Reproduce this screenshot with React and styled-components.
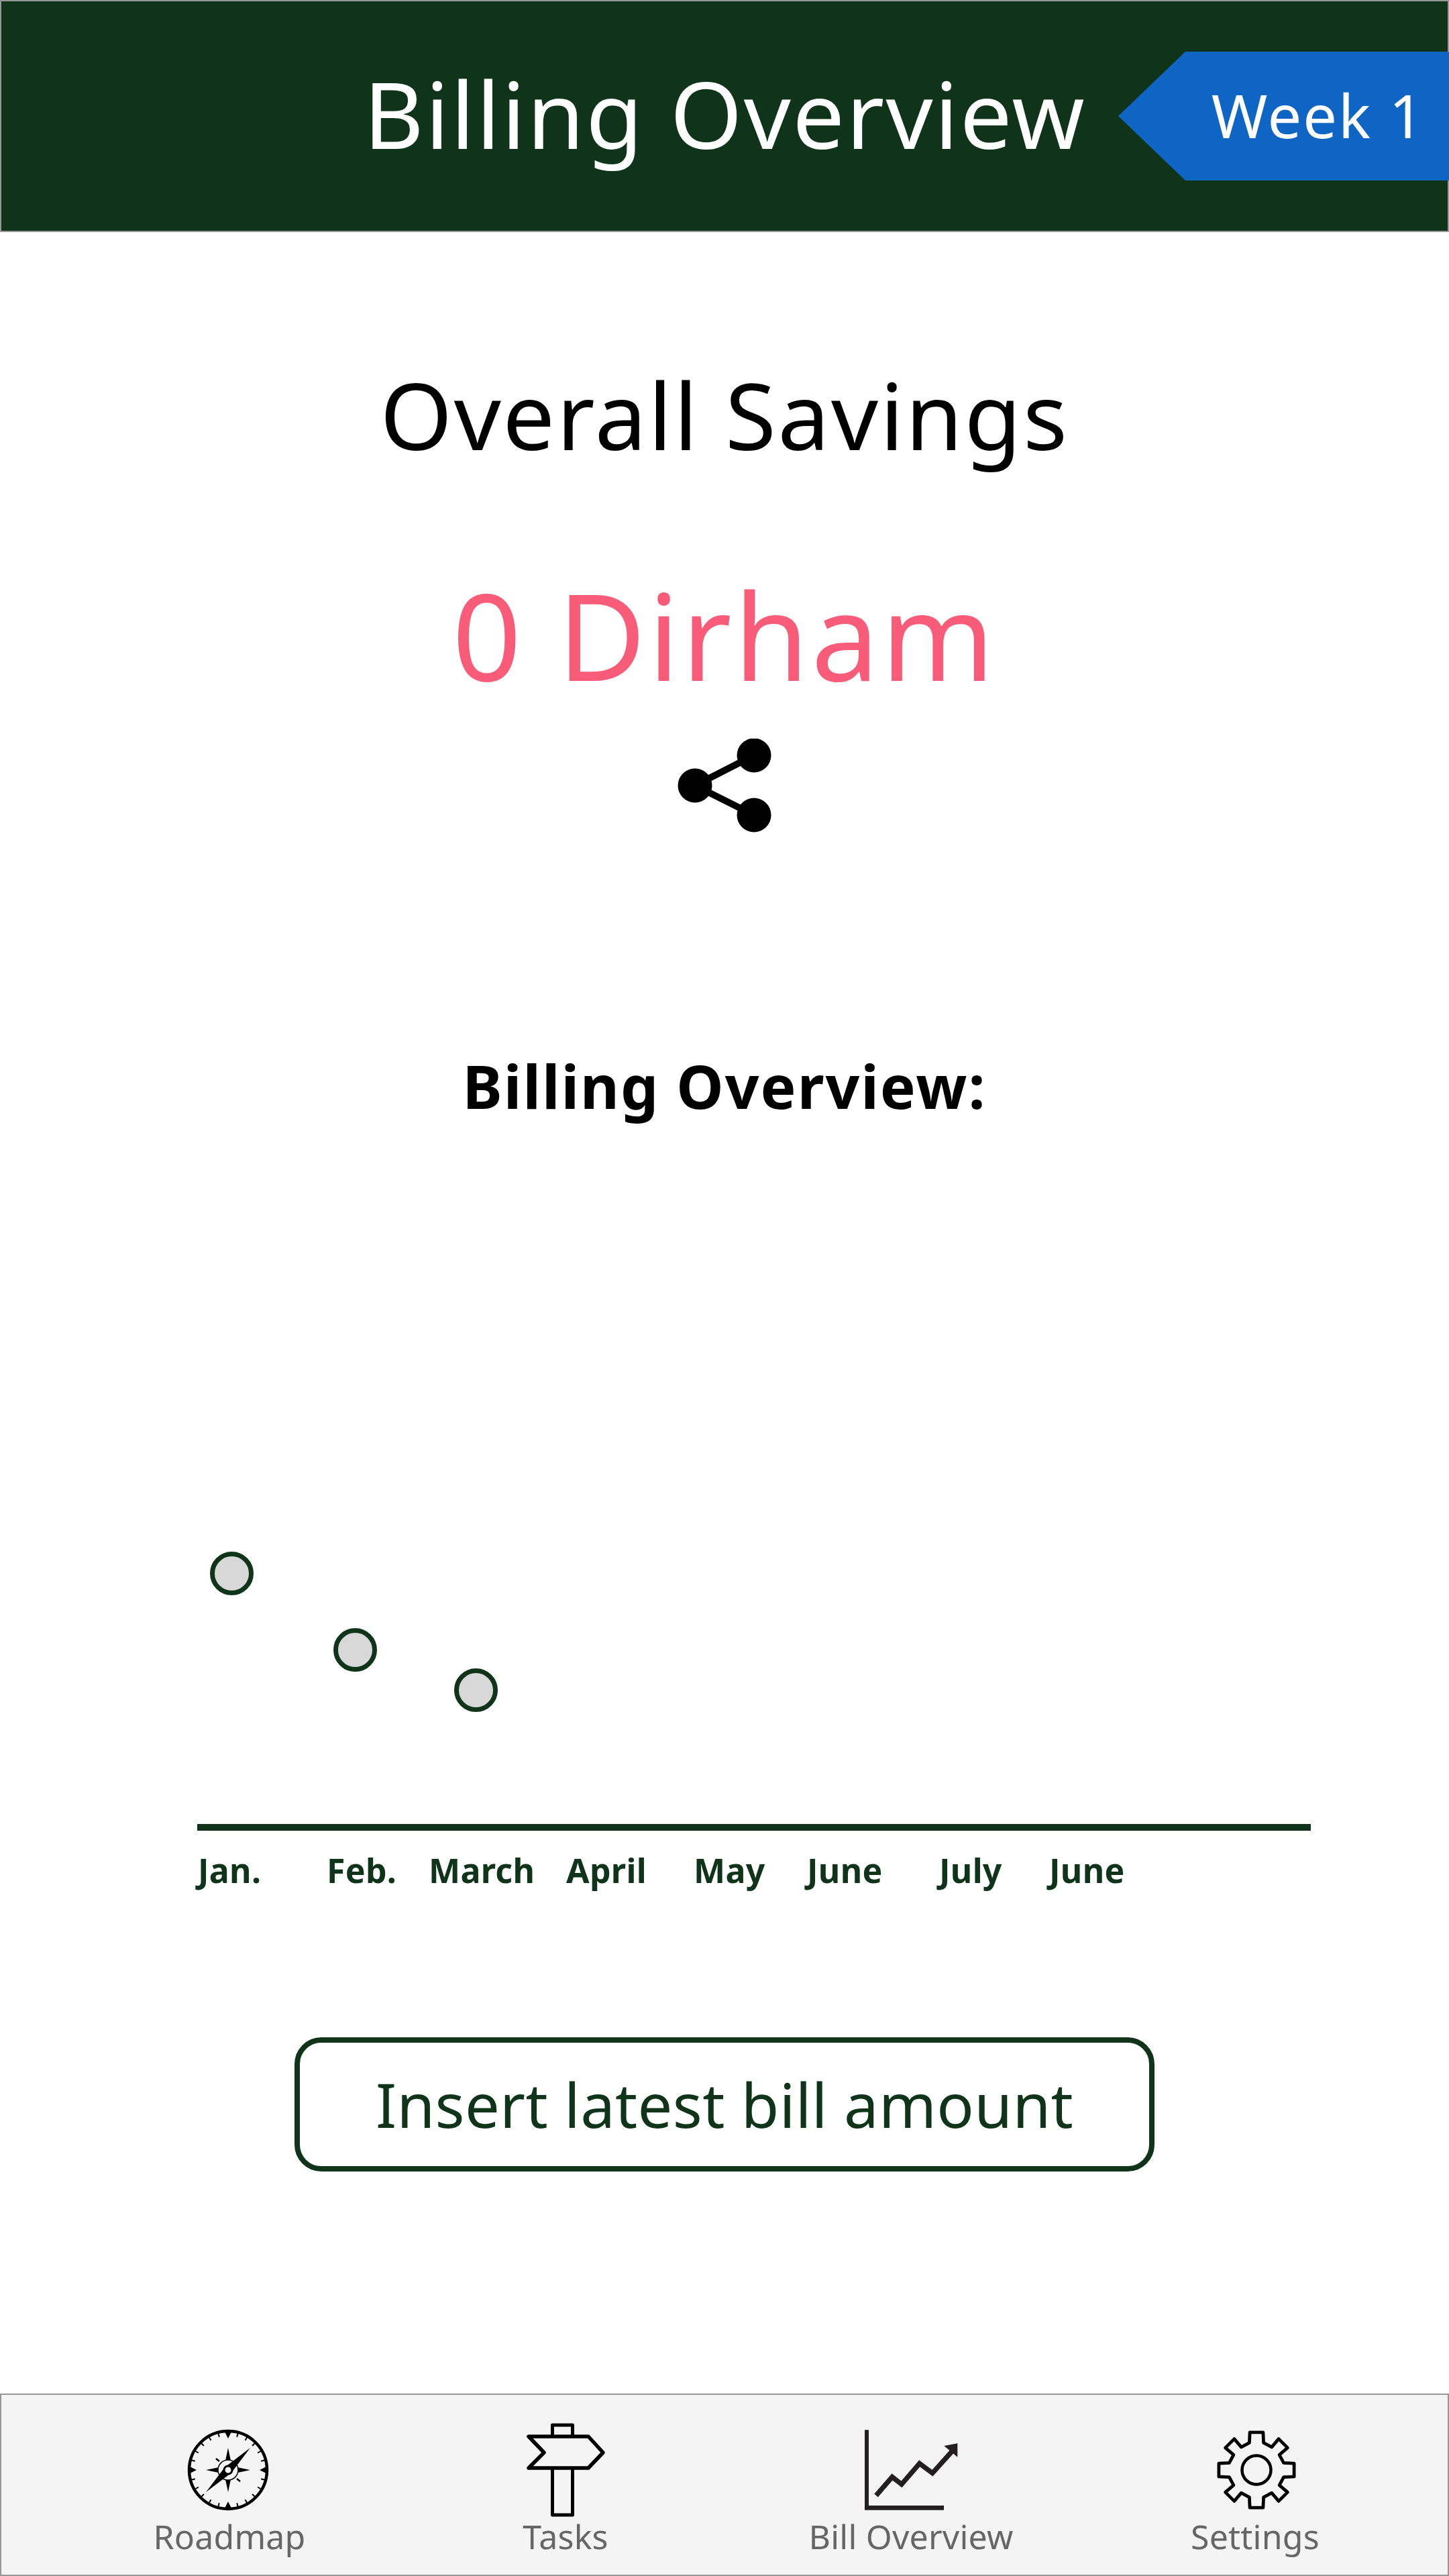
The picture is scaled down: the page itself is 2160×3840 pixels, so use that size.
import React from "react";
import styled, { createGlobalStyle } from "styled-components";

const GREEN = "#10341a";
const FONT = '"Noto Sans", "DejaVu Sans", sans-serif';

const Global = createGlobalStyle`
  html, body { margin: 0; padding: 0; background: #fff; }
  * { box-sizing: border-box; }
`;
const Page = styled.div`
  width: 2160px; height: 3840px; display: flex; flex-direction: column;
  font-family: ${FONT}; background: #fff; overflow: hidden;
`;
const Header = styled.header`
  height: 346px; flex: none; background: ${GREEN}; border: 2px solid #979797;
  display: flex; align-items: center; justify-content: flex-end;
`;
const HeaderTitle = styled.h1`
  margin: 0 48px 10px 0; font-size: 138px; font-weight: 400; color: #fff; line-height: 1;
  letter-spacing: 2.3px; white-space: nowrap;
`;
const WeekTag = styled.div`
  width: 493px; height: 192px; background: #0f65c4; color: #fff;
  clip-path: polygon(0 50%, 100px 0, 100% 0, 100% 100%, 100px 100%);
  display: flex; align-items: center; justify-content: flex-end; padding: 0 36px 4px 0;
  font-size: 90px; line-height: 1; letter-spacing: 2px; margin-right: -2px; white-space: nowrap;
`;
const Main = styled.main`
  flex: 1; display: flex; flex-direction: column; align-items: center; min-height: 0;
`;
const SavingsTitle = styled.h2`
  margin: 202px 0 0; font-size: 138px; font-weight: 400; line-height: 1; color: #000;
  letter-spacing: 2.5px;
`;
const Amount = styled.div`
  margin-top: 170px; font-size: 180px; line-height: 1; color: #f85c78; letter-spacing: 3.6px;
`;
const ShareIcon = styled.svg`
  display: block; margin-top: 65px; width: 140px; height: 140px; flex: none;
`;
const ChartTitle = styled.h3`
  margin: 333px 0 0; font-size: 89px; font-weight: 700; line-height: 1; color: #000;
  letter-spacing: 2px;
`;
const Chart = styled.div`
  position: relative; width: 1660px; margin: 650px 0 0 88px; height: 518px; flex: none;
  display: flex; flex-direction: column; justify-content: flex-end;
`;
const Dot = styled.span`
  position: absolute; width: 65px; height: 65px; border-radius: 50%;
  background: #d8d8d8; border: 7px solid ${GREEN};
`;
const Axis = styled.div`
  height: 10px; background: ${GREEN}; flex: none;
`;
const Months = styled.div`
  display: grid; grid-template-columns: 192px 152px 205px 190px 169px 197px 164px 1fr;
  margin-top: 29px; height: 73px; align-items: start; padding-left: 1px;
`;
const Month = styled.span`
  font-size: 50px; font-weight: 700; color: ${GREEN}; line-height: 1.2; white-space: nowrap;
  letter-spacing: 0.3px;
`;
const InsertButton = styled.button`
  width: 1282px; height: 200px; flex: none; margin-top: 206px; background: #fff;
  border: 8px solid ${GREEN}; border-radius: 40px; color: ${GREEN}; font-family: inherit;
  font-size: 92px; letter-spacing: 0.3px; padding: 0; line-height: 1;
`;
const Nav = styled.nav`
  height: 272px; flex: none; background: #f4f4f4; border: 2px solid #979797;
  display: grid; grid-template-columns: 500px 502px 528px 498px;
  padding: 42px 0 0 90px; justify-content: start;
`;
const NavItem = styled.div`
  display: flex; flex-direction: column; align-items: center;
`;
const IconBox = styled.div`
  width: 150px; height: 140px; display: flex; align-items: center; justify-content: center; flex: none;
  margin-left: ${(p) => p.$nudge || 0}px;
`;
const NavLabel = styled.span`
  font-size: 50px; line-height: 60px; color: #666; letter-spacing: 0.2px; white-space: nowrap; margin-top: -1px;
`;

const ticks = Array.from({ length: 24 }, (_, i) => i * 15);
const Compass = () => (
  <svg width="122" height="122" viewBox="-61 -61 122 122">
    <circle r="58" fill="none" stroke="#000" strokeWidth="4.5" />
    {ticks.filter((a) => a % 90 !== 0).map((a) => (
      <line key={a} x1="0" y1="-51" x2="0" y2="-58" stroke="#000" strokeWidth="2" transform={`rotate(${a})`} />
    ))}
    {[0, 90, 180, 270].map((a) => (
      <path key={a} d="M-5.5 -58 H5.5 L0 -47 Z" fill="#000" transform={`rotate(${a})`} />
    ))}
    <path d="M0 -33 L4 -14 L14 -4 L33 0 L14 4 L4 14 L0 33 L-4 14 L-14 4 L-33 0 L-14 -4 L-4 -14 Z" fill="#000" />
    <path d="M-13 -13 L-18 -17 M13 13 L18 17" stroke="#000" strokeWidth="2.5" />
    <circle r="15" fill="#f4f4f4" stroke="#000" strokeWidth="1.5" />
    <path d="M33 -33 L5 4 L-33 33 L-5 -4 Z" fill="#000" />
    <circle r="6" fill="#f4f4f4" stroke="#000" strokeWidth="3" />
  </svg>
);
const Signpost = () => (
  <svg width="120" height="140" viewBox="0 0 120 140">
    <path d="M40.5 20 V3 H70.5 V20 M40.5 67 V137 H70.5 V67" fill="none" stroke="#000" strokeWidth="5" strokeLinejoin="round" />
    <path d="M5 20 H94 L116 44 L94 67 H5 L28 44 Z" fill="none" stroke="#000" strokeWidth="5.5" strokeLinejoin="round" />
  </svg>
);
const Trend = () => (
  <svg width="142" height="122" viewBox="0 0 142 122">
    <path d="M2 1.3 H8 V114 H120 V120.7 H2 Z" fill="#231f20" />
    <path d="M19 99 L43 71.3 L57 82.3 L83.7 51.3 L103 65.7 L133 32.3" fill="none" stroke="#231f20" strokeWidth="7.3" />
    <path d="M120.3 25 L140.3 21.3 L140.3 41.7 Z" fill="#231f20" />
  </svg>
);
const gearPath = (() => {
  const pts = [];
  for (let i = 0; i < 8; i++) {
    const a = (i * Math.PI) / 4 - Math.PI / 2;
    const p = (deg, r) => {
      const t = a + (deg * Math.PI) / 180;
      return [r * Math.cos(t), r * Math.sin(t)];
    };
    const base = i % 2 === 0 ? 14.6 : 11.4;
    const tip = i % 2 === 0 ? 10 : 9.5;
    const low = i % 2 === 0 ? 42 : 41;
    pts.push(p(-base, low), p(-tip, 57), p(tip, 57), p(base, low));
  }
  return "M" + pts.map((q) => q[0].toFixed(1) + " " + q[1].toFixed(1)).join("L") + "Z";
})();
const Gear = () => (
  <svg width="124" height="124" viewBox="-62 -62 124 124">
    <path d={gearPath} fill="none" stroke="#000" strokeWidth="4.8" strokeLinejoin="round" />
    <circle r="21.5" fill="none" stroke="#000" strokeWidth="4.5" />
  </svg>
);

const dots = [
  { x: 19, y: 0 },
  { x: 203, y: 114 },
  { x: 383, y: 174 },
];
const months = ["Jan.", "Feb.", "March", "April", "May", "June", "July", "June"];
const navItems = [
  { label: "Roadmap", Icon: Compass, nudge: -5 },
  { label: "Tasks", Icon: Signpost, nudge: 0 },
  { label: "Bill Overview", Icon: Trend, nudge: 0 },
  { label: "Settings", Icon: Gear, nudge: 3 },
];

export default function App() {
  return (
    <Page>
      <Global />
      <Header>
        <HeaderTitle>Billing Overview</HeaderTitle>
        <WeekTag>Week 1</WeekTag>
      </Header>
      <Main>
        <SavingsTitle>Overall Savings</SavingsTitle>
        <Amount>0 Dirham</Amount>
        <ShareIcon viewBox="0 0 140 140">
          <path d="M114 25 L26 70 L114 114" fill="none" stroke="#000" strokeWidth="10" />
          <circle cx="114" cy="25" r="25.5" />
          <circle cx="26" cy="70" r="25.5" />
          <circle cx="114" cy="114" r="25.5" />
        </ShareIcon>
        <ChartTitle>Billing Overview:</ChartTitle>
        <Chart>
          {dots.map((d) => (
            <Dot key={d.x} style={{ left: d.x, top: d.y }} />
          ))}
          <Axis />
          <Months>
            {months.map((m, i) => (
              <Month key={i}>{m}</Month>
            ))}
          </Months>
        </Chart>
        <InsertButton>Insert latest bill amount</InsertButton>
      </Main>
      <Nav>
        {navItems.map(({ label, Icon, nudge }) => (
          <NavItem key={label}>
            <IconBox $nudge={nudge}><Icon /></IconBox>
            <NavLabel>{label}</NavLabel>
          </NavItem>
        ))}
      </Nav>
    </Page>
  );
}
